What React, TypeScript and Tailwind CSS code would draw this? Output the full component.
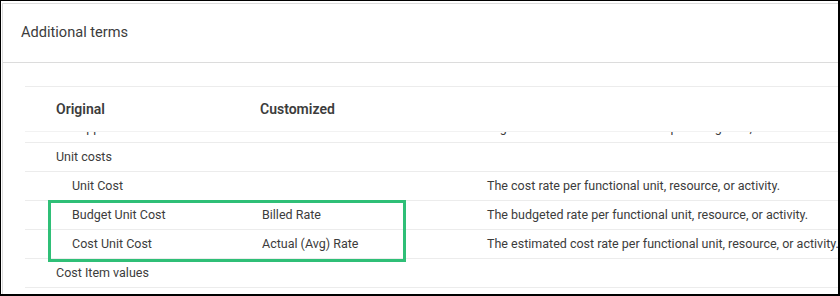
import React from "react";

type Row = { orig: string; level: number; custom?: string; desc?: string };

const rows: Row[] = [
  { orig: "Unit costs", level: 0 },
  { orig: "Unit Cost", level: 1, desc: "The cost rate per functional unit, resource, or activity." },
  { orig: "Budget Unit Cost", level: 1, custom: "Billed Rate", desc: "The budgeted rate per functional unit, resource, or activity." },
  { orig: "Cost Unit Cost", level: 1, custom: "Actual (Avg) Rate", desc: "The estimated cost rate per functional unit, resource, or activity." },
  { orig: "Cost Item values", level: 0 },
];

function TableRow({ r }: { r: Row }) {
  return (
    <div className="flex h-[29px] shrink-0 items-center border-b border-[#ececec] whitespace-nowrap">
      <div className={`w-[231px] shrink-0 ${r.level === 1 ? "pl-[47px]" : "pl-[31px]"}`}>{r.orig}</div>
      <div className="w-[231px] shrink-0 pl-[6px]">{r.custom ?? ""}</div>
      <div className="shrink-0">{r.desc ?? ""}</div>
    </div>
  );
}

export default function App() {
  return (
    <div
      className="relative flex h-[296px] w-[840px] overflow-hidden border-l border-t border-r-2 border-b-2 border-black bg-white pl-[1px] pt-[2px] text-[#3c3c3c]"
      style={{ fontFamily: "Roboto, 'Noto Sans', sans-serif" }}
    >
      <div className="flex flex-1 flex-col border-l border-t border-[#dcdcdc]">
        <div className="flex h-[59px] shrink-0 items-center border-b border-[#dcdcdc] pl-[18px] text-[14.6px]">
          Additional terms
        </div>
        <div className="relative flex flex-1 flex-col pl-[22px] pt-[23px] text-[12.5px]">
          <div className="flex flex-col border-t border-[#ececec]">
            <div className="flex h-[45px] shrink-0 items-center border-b border-[#f2f2f2] text-[14px] font-semibold">
              <div className="w-[231px] shrink-0 pl-[31px]">Original</div>
              <div className="shrink-0 pl-[4px]">Customized</div>
            </div>
            <div className="h-[11px] shrink-0 overflow-hidden border-b border-[#ececec]">
              <div className="-mt-[18px] flex h-[29px] items-center whitespace-nowrap">
                <div className="w-[231px] shrink-0 pl-[47px]">Supplier</div>
                <div className="w-[231px] shrink-0 pl-[6px]"></div>
                <div className="shrink-0">Organizations or individuals who provide goods, services or raw materials.</div>
              </div>
            </div>
            {rows.map((r) => (
              <TableRow key={r.orig} r={r} />
            ))}
          </div>
          <div className="absolute left-[45px] top-[137px] h-[62px] w-[358px] border-[3px] border-[#2fbf77]"></div>
        </div>
      </div>
    </div>
  );
}
